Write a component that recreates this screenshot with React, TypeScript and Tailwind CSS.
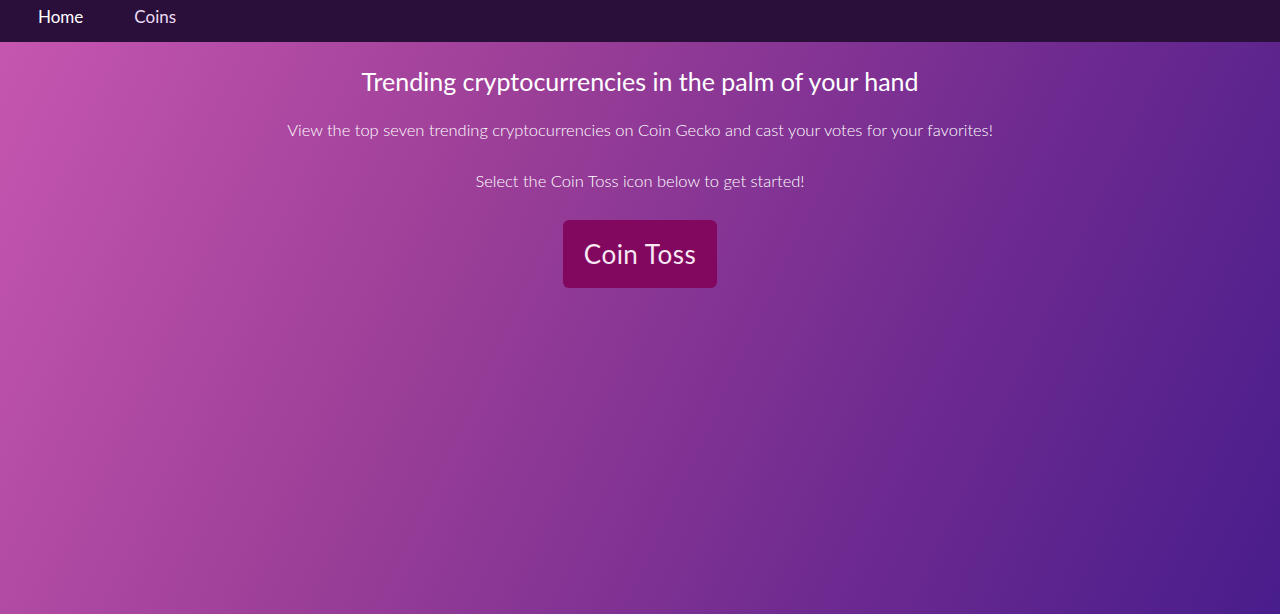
export default function App() {
  return (
    <div className="min-h-screen flex flex-col font-['Lato',_'Noto_Sans',_sans-serif] text-white">
      <nav className="h-[42px] bg-[#2a0f3b] flex items-start pt-[7px] px-[38px] gap-[51px] text-[17px] leading-[20px] shrink-0">
        <a href="#" className="text-white">Home</a>
        <a href="#" className="text-[#ecdcf2]">Coins</a>
      </nav>
      <main className="flex-1 flex flex-col items-center bg-[linear-gradient(115deg,#c656b0_0%,#9c3f98_35%,#6e2a90_70%,#481d8c_100%)] pt-[24px]">
        <h1 className="text-[25px] font-normal leading-[30px]">Trending cryptocurrencies in the palm of your hand</h1>
        <p className="mt-[24px] text-[16.5px] font-light leading-[20px] text-white">
          View the top seven trending cryptocurrencies on Coin Gecko and cast your votes for your favorites!
        </p>
        <p className="mt-[31px] text-[16.5px] font-light leading-[20px] text-white">
          Select the Coin Toss icon below to get started!
        </p>
        <button className="mt-[29px] w-[154px] h-[68px] rounded-[6px] bg-[#82075f] text-[26px] tracking-[0.5px] text-[#f7e8f3]">
          Coin Toss
        </button>
      </main>
    </div>
  );
}
